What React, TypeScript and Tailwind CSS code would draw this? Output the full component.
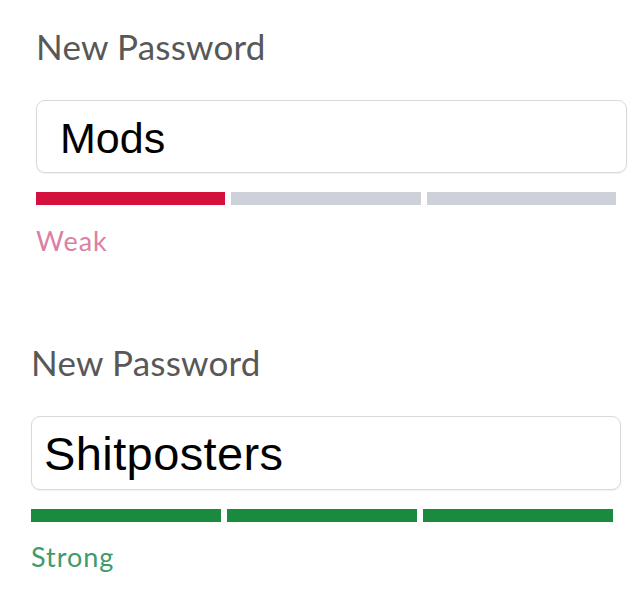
import React from "react";

export default function App() {
  return (
    <div className="w-[640px] h-[594px] bg-white overflow-hidden pt-[29px]" style={{ fontFamily: "Lato, 'Noto Sans', sans-serif" }}>
      {/* Section 1 */}
      <div className="ml-[36px] w-[591px] flex flex-col">
        <div className="text-[35px] leading-[35px] text-[#585858] tracking-[0.2px]">New Password</div>
        <div className="mt-[36px] h-[73px] rounded-[9px] border-[1.5px] border-[#d9d9d9] bg-white flex items-center pl-[23px] pt-[4px] shadow-[0_1px_2px_rgba(0,0,0,0.06)]">
          <span className="text-[43px] leading-[43px] text-black" style={{ fontFamily: "'Liberation Sans', Arial, sans-serif" }}>Mods</span>
        </div>
        <div className="mt-[19px] flex gap-[6px] w-[580px]">
          <div className="flex-1 h-[13px] bg-[#d3113c]" />
          <div className="flex-1 h-[13px] bg-[#cdd2da]" />
          <div className="flex-1 h-[13px] bg-[#cdd2da]" />
        </div>
        <div className="mt-[22px] text-[27px] leading-[27px] text-[#db80a4] tracking-[1px]">Weak</div>
      </div>

      {/* Section 2 */}
      <div className="ml-[31px] w-[590px] flex flex-col mt-[91px]">
        <div className="text-[35px] leading-[35px] text-[#585858] tracking-[0.2px]">New Password</div>
        <div className="mt-[36px] h-[74px] rounded-[9px] border-[1.5px] border-[#d9d9d9] bg-white flex items-center pl-[12px] pt-[1px] shadow-[0_1px_2px_rgba(0,0,0,0.06)]">
          <span className="text-[47px] leading-[47px] text-black tracking-[0.4px]" style={{ fontFamily: "'Liberation Sans', Arial, sans-serif" }}>Shitposters</span>
        </div>
        <div className="mt-[19px] flex gap-[6px] w-[582px]">
          <div className="flex-1 h-[13px] bg-[#1a8a3e]" />
          <div className="flex-1 h-[13px] bg-[#1a8a3e]" />
          <div className="flex-1 h-[13px] bg-[#1a8a3e]" />
        </div>
        <div className="mt-[21px] text-[27px] leading-[27px] text-[#3f9a6a] tracking-[1px]">Strong</div>
      </div>
    </div>
  );
}
